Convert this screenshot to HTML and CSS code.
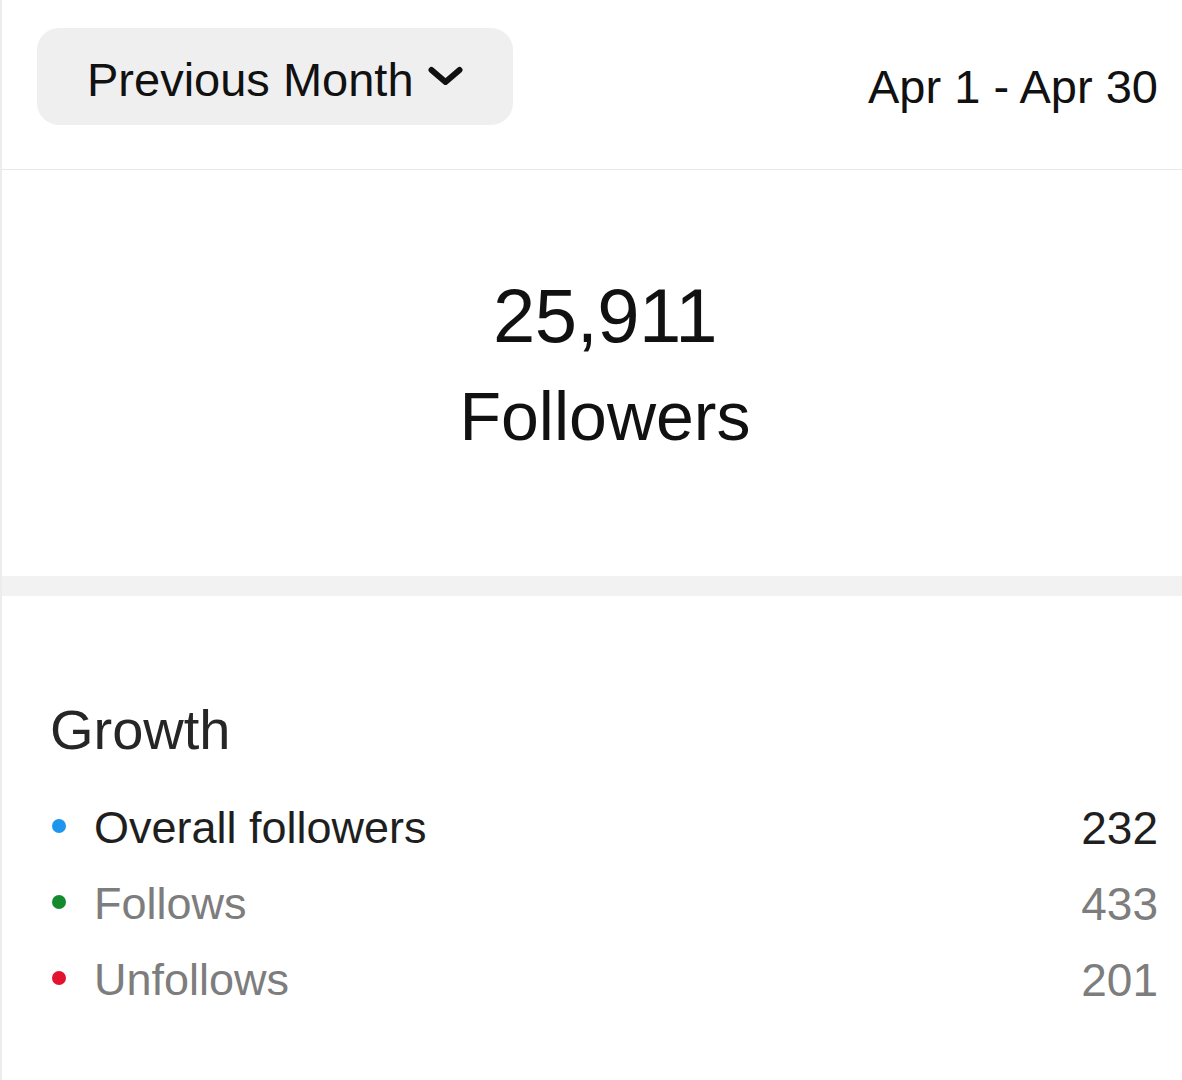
FILE: index.html
```html
<!DOCTYPE html>
<html lang="en">
<head>
<meta charset="utf-8">
<title>Followers</title>
<link rel="stylesheet" href="styles.css">
</head>
<body>
<div class="page">
  <header class="header">
    <button class="range-btn" type="button">
      <span>Previous Month</span>
      <svg class="chev" width="35" height="20" viewBox="0 0 35 20" aria-hidden="true">
        <polyline points="3.5,4 17.5,16 31.5,4" fill="none" stroke="#111" stroke-width="6" stroke-linecap="round" stroke-linejoin="round"/>
      </svg>
    </button>
    <div class="date">Apr 1 - Apr 30</div>
  </header>

  <section class="hero">
    <div class="count">25,911</div>
    <div class="count-label">Followers</div>
  </section>

  <div class="band"></div>

  <section class="growth">
    <h2 class="growth-title">Growth</h2>
    <ul class="legend">
      <li class="row">
        <span class="dot dot-blue"></span>
        <span class="label">Overall followers</span>
        <span class="value">232</span>
      </li>
      <li class="row muted">
        <span class="dot dot-green"></span>
        <span class="label">Follows</span>
        <span class="value">433</span>
      </li>
      <li class="row muted">
        <span class="dot dot-red"></span>
        <span class="label">Unfollows</span>
        <span class="value">201</span>
      </li>
    </ul>
  </section>
</div>
</body>
</html>
```

FILE: styles.css
```css
html, body {
  margin: 0;
  padding: 0;
  background: #ffffff;
}

body {
  font-family: "Liberation Sans", Arial, sans-serif;
  color: #111111;
}

.page {
  min-height: 1080px;
  border-left: 2px solid #ececec;
}

.header {
  display: flex;
  justify-content: space-between;
  align-items: flex-start;
  box-sizing: border-box;
  height: 170px;
  padding: 28px 24px 0 35px;
  border-bottom: 1px solid #e8e8e8;
}

.range-btn {
  display: flex;
  align-items: flex-start;
  gap: 14px;
  box-sizing: border-box;
  width: 476px;
  height: 97px;
  padding: 28px 0 0 50px;
  border: none;
  border-radius: 22px;
  background: #efefef;
  font-family: inherit;
  font-size: 47px;
  line-height: 47px;
  color: #111111;
  cursor: pointer;
}

.chev {
  margin-top: 10px;
}

.date {
  margin-top: 35px;
  font-size: 47px;
  line-height: 47px;
  color: #111111;
}

.hero {
  display: flex;
  flex-direction: column;
  align-items: center;
  padding: 108px 0 126px 26px;
}

.count {
  font-size: 76px;
  line-height: 76px;
  letter-spacing: -0.5px;
}

.count-label {
  margin-top: 28px;
  font-size: 68px;
  line-height: 68px;
}

.band {
  height: 20px;
  background: #f2f2f2;
}

.growth {
  padding: 106px 24px 0 48px;
}

.growth-title {
  margin: 0;
  font-size: 56px;
  line-height: 56px;
  font-weight: normal;
  color: #262626;
}

.legend {
  list-style: none;
  margin: 32px 0 0;
  padding: 0;
}

.row {
  display: flex;
  align-items: center;
  height: 76px;
  font-size: 45px;
  line-height: 76px;
  color: #1f1f1f;
}

.row.muted {
  color: #7d7d7d;
}

.dot {
  flex: none;
  width: 14px;
  height: 14px;
  margin: -4px 28px 0 2px;
  border-radius: 50%;
}

.dot-blue { background: #1e96ee; }
.dot-green { background: #148a2d; }
.dot-red { background: #e2132f; }

.label {
  flex: 1;
}

.value {
  font-size: 46px;
  text-align: right;
}
```
